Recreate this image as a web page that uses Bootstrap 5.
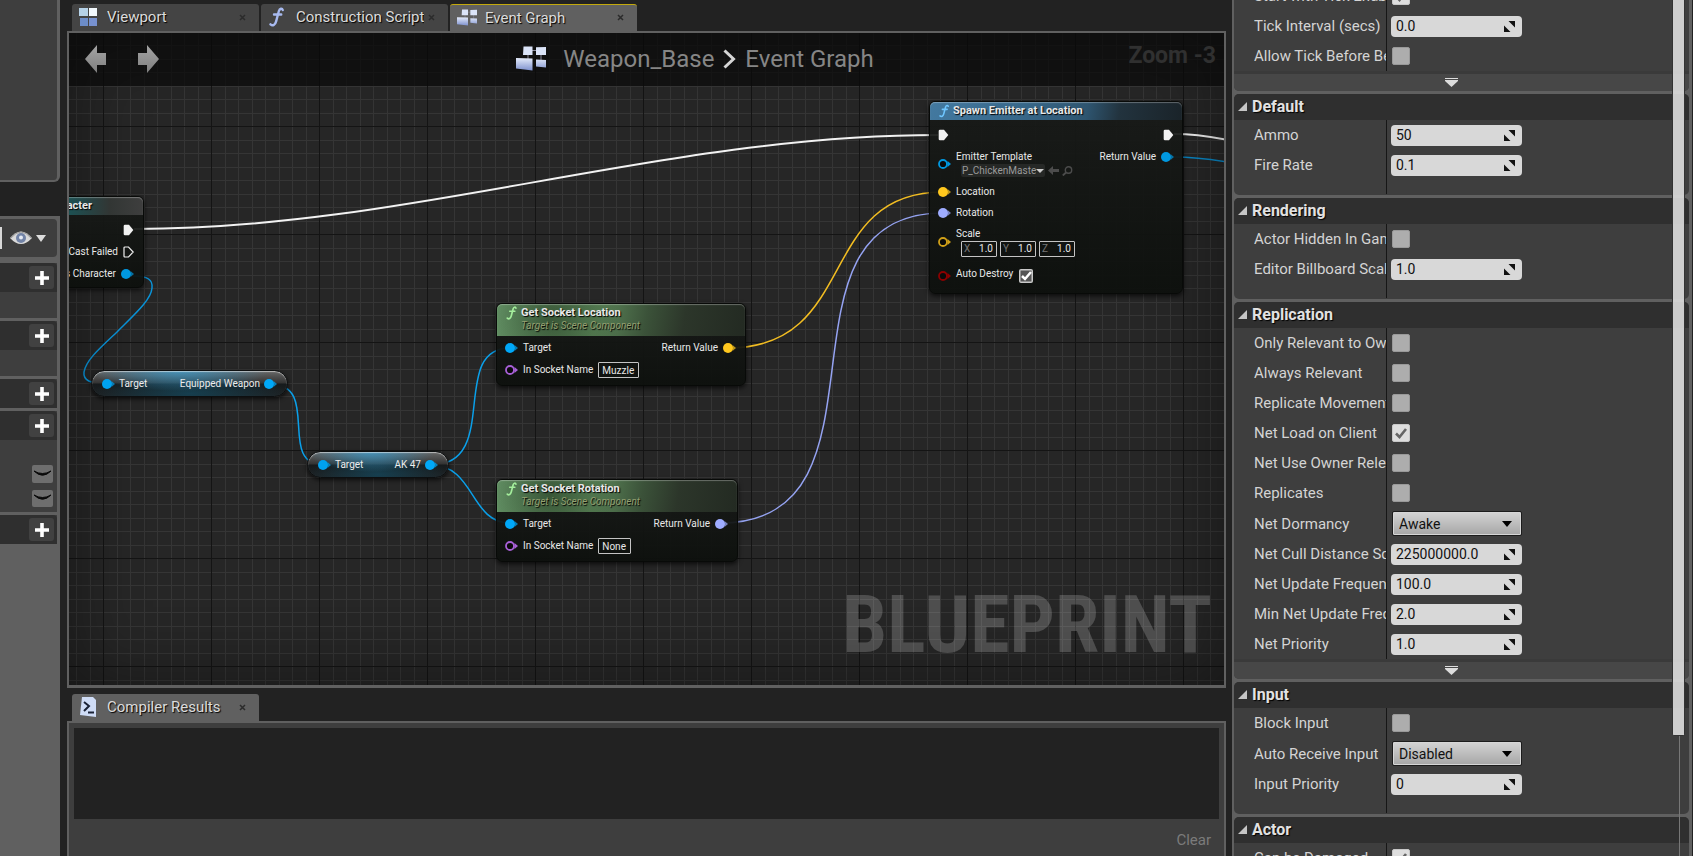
<!DOCTYPE html>
<html lang="en">
<head>
<meta charset="utf-8">
<meta name="viewport" content="width=device-width, initial-scale=1">
<title>Weapon_Base</title>
<link href="https://cdn.jsdelivr.net/npm/bootstrap@5.3.0/dist/css/bootstrap.min.css" rel="stylesheet">
<script src="https://cdn.jsdelivr.net/npm/bootstrap@5.3.0/dist/js/bootstrap.bundle.min.js"></script>
<style>
:root { --frame:#606060; --panel:#3e3e3e; --head:#2f2f2f; --dark:#222222; --ink:#d4d4d4; }
body { background:var(--dark); color:var(--ink); font-family:Roboto, "Liberation Sans", sans-serif; font-size:15px; line-height:20px; }
svg { display:block; flex:none; }
button { border:0; padding:0; background:none; color:inherit; }

/* left strip */
.side-left { width:60px; flex:none; }
.side-top { height:182px; background:var(--panel); border:solid var(--frame); border-width:0 3px 2px 0; border-radius:0 0 6px 0; margin-bottom:34px; }
.side-list { background:var(--frame); padding:3px 3px 0 0; gap:3px; }
.tools { height:38px; background:var(--panel); border-radius:0 4px 4px 0; margin-bottom:3px; gap:4px; }
.tools .search-end { width:2px; height:22px; background:#d8d8d8; margin-right:4px; }
.group { background:var(--panel); }
.group-head { height:29px; background:var(--head); border-radius:0 4px 0 0; padding-right:3px; }
.add-btn { width:25px; height:23px; background:#414141; border-radius:3px; }
.group-body { min-height:26px; }
.group-vars { padding:25px 4px 5px; gap:7px; height:72px; }
.shut-btn { width:21px; height:18px; background:#6e6e6e; border-radius:2px; }

/* tabs */
.center { margin:0 6px 0 7px; }
.tabs { padding:4px 0 0 5px; gap:2px; height:31px; }
.tabs.lower { height:33px; padding-top:6px; }
.doc-tab { width:187px; height:27px; background:#444; border-radius:3px 3px 0 0; padding:0 13px 1px 7px; color:#dcdcdc; text-shadow:1px 1px 1px #000; white-space:nowrap; overflow:hidden; }
.doc-tab.current { background:var(--frame); }
.doc-tab.lit { border-top:1px solid #c3a90c; }
.doc-tab .tab-icon { width:19px; margin-right:9px; }
.doc-tab .tab-name { flex:1; overflow:hidden; text-align:left; }

/* graph */
.graph { border:2px solid var(--frame); border-bottom-width:3px; background:#262626; overflow:hidden; }
.graph-svg { position:absolute; inset:0; width:100%; height:100%; }
.vignette { position:absolute; inset:0; box-shadow:inset 0 0 70px rgba(0,0,0,.45); pointer-events:none; }
.title-bar { position:relative; height:53px; padding-bottom:2px; background:rgba(10,10,10,.72); }
.title-bar .history { width:97px; padding-left:16px; gap:30px; }
.crumbs { font-size:24px; line-height:30px; color:#868686; gap:9px; }
.crumbs a { color:inherit; text-decoration:none; }
.zoom-text { position:absolute; right:8px; top:8px; font-size:23px; line-height:30px; font-weight:700; color:#303030; }
.watermark { position:absolute; right:12px; bottom:14px; font:700 80px/92px "Roboto Condensed", "Liberation Sans Narrow", Roboto, sans-serif; color:rgba(255,255,255,.19); }

.node { position:absolute; border:1px solid #080a08; border-radius:6px; background:linear-gradient(rgba(24,26,24,.93), rgba(13,16,13,.95)); box-shadow:0 2px 5px rgba(0,0,0,.7); font-size:10px; line-height:14px; color:#e8e8e8; }
.node-head { border-radius:5px 5px 0 0; padding:0 9px; gap:4px; font-weight:700; font-size:11px; line-height:14px; box-shadow:inset 0 1px 1px rgba(255,255,255,.3); text-shadow:1px 1px 1px #000; }
.node-head.func { height:18px; background:linear-gradient(100deg,#4379a0,#38688a 35%,#2e5570 62%,#22333e 75%,#1a2329); }
.node-head.pure { height:32px; padding-top:2px; background:radial-gradient(circle at 22% 45%,rgba(30,50,28,.6),transparent 35%),linear-gradient(100deg,#68986a,#5c8659 40%,#3b5239 60%,#2c362a 75%,#232a22); }
.node-head.cast { height:18px; background:linear-gradient(90deg,#174a4c,#1d5052 45%,#323634 75%,#3e3e3e); padding-right:51px; }
.node-head em { display:block; font-weight:400; font-size:10px; line-height:12px; color:#93a070; }
.node-body { padding-top:8px; }
.node-body.close-in { padding-top:5px; }
.pins-in { gap:6px; padding-left:8px; }
.pins-in.long { gap:7px; }
.pins-out { gap:8px; padding-right:9px; }
.pin { gap:5px; height:14px; white-space:nowrap; }
.pin.two-line { height:29px; }
.pill { position:absolute; height:27px; border:1px solid #0d0f10; border-radius:14px; padding:0 10px; font-size:10px; line-height:14px; color:#ededed; box-shadow:0 2px 4px rgba(0,0,0,.7), inset 0 1px 1px rgba(255,255,255,.55);
  background:radial-gradient(ellipse 45% 80% at 45% 0,rgba(60,150,195,.85),transparent),radial-gradient(ellipse 50% 80% at 50% 90%,rgba(20,70,90,.8),transparent),linear-gradient(#686868,#333 48%,#161a1c 52%,#1e2224); }
.pill .pin { gap:4px; }
.mini { height:16px; border:1px solid #c4c4c4; border-radius:1px; background:transparent; color:#e8e8e8; font-size:10px; line-height:14px; padding:0 3px; }
.xyz { height:16px; width:36px; border:1px solid #c4c4c4; border-radius:1px; color:#777; padding:0 3px 0 2px; }
.xyz input { width:18px; border:0; padding:0; background:transparent; color:#e8e8e8; text-align:right; font-size:10px; line-height:14px; }
.xyz-row { gap:3px; padding-left:5px; }
.asset-row { gap:3px; padding-left:5px; line-height:13px; }
.asset { width:84px; height:13px; background:#262826; border-radius:2px; color:#9a9a9a; padding:0 1px; border:0; }
.asset span { overflow:hidden; width:74px; text-align:left; }
.node-check { appearance:none; width:14px; height:14px; margin:3px 0 0 1px; border-radius:2px; background:#c9c9c9 url("data:image/svg+xml,%3Csvg xmlns='http://www.w3.org/2000/svg' viewBox='0 0 14 14'%3E%3Cpath d='M1.500 1.500h11v11h-11z' fill='%23555'/%3E%3Cpath d='M3 7l3 3 6-7' fill='none' stroke='%23fff' stroke-width='2.500'/%3E%3C/svg%3E"); }

/* compiler results */
.compiler { height:135px; border:2px solid var(--frame); border-bottom:0; background:var(--panel); padding:5px 5px 0; }
.log { height:91px; background:var(--dark); }
.clear-btn { color:#7b7b7b; margin:11px 8px 0 0; }

/* details */
.details { width:461px; flex:none; padding-right:1px; }
.details-frame { background:var(--frame); padding:0 3px 0 2px; }
.details-scroll { margin-top:-19px; gap:3px; }
.section { background:var(--panel); border-radius:5px; overflow:hidden; padding-bottom:1px; flex:none; }
.section.has-more { padding-bottom:0; }
.section-head { height:26px; background:var(--head); padding-left:4px; gap:5px; width:100%; font-weight:700; font-size:16px; color:#e2e2e2; text-shadow:1px 1px 1px #000; }
.section-head svg { margin-bottom:2px; }
.prop { height:30px; }
.prop.tall { height:31px; }
.prop.blank { height:14px; }
.prop > label, .prop > .lead-gap { width:153px; height:100%; padding-left:20px; border-right:1px solid #161616; white-space:nowrap; overflow:hidden; flex:none; }
.prop > label span { width:132px; overflow:hidden; display:block; }
.num { position:relative; margin-left:4px; width:131px; }
.num input { width:100%; height:21px; border:0; border-radius:4px; background:#d8d8d8; color:#111; font-size:14px; padding:0 24px 0 5px; display:block; }
.num svg { position:absolute; right:7px; top:5px; }
.prop .form-check-input { width:18px; height:18px; margin:0 0 0 5px; border:1px solid #999; border-radius:2px; background-color:#adadad; flex:none; }
.prop .form-check-input:checked { background-color:#dedede; border-color:#c8c8c8; background-size:18px; background-image:url("data:image/svg+xml,%3Csvg xmlns='http://www.w3.org/2000/svg' viewBox='0 0 18 18'%3E%3Cpath d='M4 9.500l3.500 3.500 6.500-8' fill='none' stroke='%23666' stroke-width='2.600'/%3E%3C/svg%3E"); }
.prop .form-select { width:130px; height:25px; margin-left:5px; border:1px solid #1c1c1c; border-radius:2px; color:#111; font-size:14px; line-height:20px; padding:1px 24px 1px 6px; box-shadow:inset 0 0 0 1px #d6d6d6;
  background:url("data:image/svg+xml,%3Csvg xmlns='http://www.w3.org/2000/svg' viewBox='0 0 10 6'%3E%3Cpath d='M0 0h10L5 6z'/%3E%3C/svg%3E") right 9px center/10px 6px no-repeat, linear-gradient(#d4d4d4,#a6a6a6); }
.more { height:20px; width:100%; border-top:3px solid #3a3a3a; background:#474747; padding:0 20px 1px 0; }
.thumb { position:absolute; top:0; right:7px; width:13px; height:86%; background:rgba(222,222,222,.9); border:solid #333; border-width:0 1px 1px; border-radius:0 0 2px 2px; }
.rail { position:absolute; top:86%; bottom:0; right:12px; width:1px; background:#777; }
</style>
</head>
<body class="vh-100 overflow-hidden m-0">
<svg width="0" height="0" class="position-absolute" aria-hidden="true">
  <defs>
    <linearGradient id="steel" x1="0" y1="0" x2="0" y2="1"><stop offset="0" stop-color="#e4ebfa"/><stop offset="1" stop-color="#7f92cf"/></linearGradient>
    <linearGradient id="arrowFill" x1="0" y1="0" x2="0" y2="1"><stop offset="0" stop-color="#a5a5a5"/><stop offset="1" stop-color="#7e7e7e"/></linearGradient>
    <symbol id="full" viewBox="0 0 13 10"><circle cx="5" cy="5" r="5" fill="currentColor"/><path d="M9.500 2 13 5 9.500 8z" fill="currentColor" opacity=".7"/></symbol>
    <symbol id="hollow" viewBox="0 0 13 10"><circle cx="5" cy="5" r="4" fill="#0a0a0a" stroke="currentColor" stroke-width="1.800"/><path d="M9.500 2 13 5 9.500 8z" fill="currentColor"/></symbol>
    <symbol id="exec" viewBox="0 0 11 12"><path d="M.700 2Q.700.700 2 .700H6L10.300 6 6 11.300H2Q.700 11.300.700 10z" fill="#f2f2f2"/></symbol>
    <symbol id="execOpen" viewBox="0 0 11 12"><path d="M1 2Q1 1 2 1H5.500L10.200 6 5.500 11H2Q1 11 1 10z" fill="none" stroke="#eee" stroke-width="1.200"/></symbol>
    <symbol id="fx" viewBox="0 0 12 16"><path d="M11 2.400C10.500.800 8.600 1 7.900 3.200L5.700 11.500C5 14.300 3 15.500 1.200 13.900M4 6H9.800" fill="none" stroke="currentColor" stroke-width="1.900" stroke-linecap="round"/></symbol>
    <symbol id="x" viewBox="0 0 7 7"><path d="M1 1l5 5M6 1L1 6" stroke="#2b2b2b" stroke-width="1.500"/></symbol>
    <symbol id="plus" viewBox="0 0 14 14"><path d="M5.200 0h3.600v5.200H14v3.600H8.800V14H5.200V8.800H0V5.200h5.200z" fill="#fff"/></symbol>
    <symbol id="shut" viewBox="0 0 19 8"><path d="M1 1Q9.500 9.500 18 1Q9.500 6 1 1z" fill="#0a0a0a" stroke="#0a0a0a"/></symbol>
    <symbol id="graphIcon" viewBox="0 0 30 24"><path d="M16 4h6M12 8v5M25 8v6" stroke="#8a8a9a"/><path d="M7.500 0H16.500V8.500H7zM20 .800 30 .500V8.500H20z" fill="#dbe4f8"/><path d="M0 11.500 16.500 12V24L0 22zM20 13 30 13.500V21L20 20z" fill="url(#steel)"/></symbol>
    <symbol id="spin" viewBox="0 0 11 11"><path d="M4.500 0H11v6.500zM0 4.500V11h6.500z" fill="#111"/></symbol>
    <symbol id="open" viewBox="0 0 9 9"><path d="M9 0v9H0z" fill="#c6c6c6"/></symbol>
    <symbol id="moreIcon" viewBox="0 0 13 9"><path d="M0 .500h13M0 2.500h13" stroke="#ddd"/><path d="M0 3h13L6.500 9z" fill="#ddd"/></symbol>
  </defs>
</svg>

<div class="d-flex h-100">
  <aside class="side-left d-flex flex-column" aria-label="My Blueprint">
    <div class="side-top flex-shrink-0"></div>
    <div class="side-list d-flex flex-column flex-grow-1">
      <div class="tools d-flex align-items-center flex-shrink-0">
        <span class="search-end"></span>
        <button class="d-flex align-items-center gap-1" aria-label="View options">
          <svg width="22" height="14" viewBox="0 0 22 14"><path d="M0 7Q11-6 22 7 11 19 0 7z" fill="#d9d9d9"/><circle cx="11" cy="7" r="5" fill="#7283a6"/><circle cx="11" cy="6.500" r="2" fill="#e5eaf3"/><path d="M1 7Q11-5 21 7" fill="none" stroke="#999"/></svg>
          <svg width="10" height="7" viewBox="0 0 10 7"><path d="M0 0h10L5 7z" fill="#ddd"/></svg>
        </button>
      </div>
      <div class="group"><div class="group-head d-flex align-items-center justify-content-end"><button class="add-btn d-flex align-items-center justify-content-center" aria-label="Add graph"><svg width="14" height="14"><use href="#plus"/></svg></button></div><div class="group-body"></div></div>
      <div class="group"><div class="group-head d-flex align-items-center justify-content-end"><button class="add-btn d-flex align-items-center justify-content-center" aria-label="Add function"><svg width="14" height="14"><use href="#plus"/></svg></button></div><div class="group-body"></div></div>
      <div class="group"><div class="group-head d-flex align-items-center justify-content-end"><button class="add-btn d-flex align-items-center justify-content-center" aria-label="Add macro"><svg width="14" height="14"><use href="#plus"/></svg></button></div></div>
      <div class="group"><div class="group-head d-flex align-items-center justify-content-end"><button class="add-btn d-flex align-items-center justify-content-center" aria-label="Add variable"><svg width="14" height="14"><use href="#plus"/></svg></button></div>
        <div class="group-vars d-flex flex-column align-items-end">
          <button class="shut-btn d-flex align-items-center justify-content-center" aria-label="Show variable"><svg width="19" height="8"><use href="#shut"/></svg></button>
          <button class="shut-btn d-flex align-items-center justify-content-center" aria-label="Show variable"><svg width="19" height="8"><use href="#shut"/></svg></button>
        </div></div>
      <div class="group"><div class="group-head d-flex align-items-center justify-content-end"><button class="add-btn d-flex align-items-center justify-content-center" aria-label="Add dispatcher"><svg width="14" height="14"><use href="#plus"/></svg></button></div></div>
    </div>
  </aside>

  <main class="center d-flex flex-column flex-grow-1 overflow-hidden">
    <div class="tabs d-flex flex-shrink-0">
      <button class="doc-tab d-flex align-items-center"><span class="tab-icon"><svg width="19" height="19" viewBox="0 0 19 19"><path d="M0 0h9v8H0z" fill="#b6d2e8"/><path d="M10 0h8v8h-8z" fill="#f2f8fd"/><path d="M1 10h8v8H1z" fill="#6c8cc8"/><path d="M10 10h8v8h-8z" fill="#7791d0"/></svg></span><span class="tab-name">Viewport</span><svg width="7" height="7"><use href="#x"/></svg></button>
      <button class="doc-tab d-flex align-items-center"><span class="tab-icon"><svg width="17" height="20" color="#a8baf0"><use href="#fx"/></svg></span><span class="tab-name">Construction Script</span><svg width="7" height="7" class="ms-1"><use href="#x"/></svg></button>
      <button class="doc-tab current lit d-flex align-items-center"><span class="tab-icon"><svg width="20" height="17"><use href="#graphIcon"/></svg></span><span class="tab-name">Event Graph</span><svg width="7" height="7"><use href="#x"/></svg></button>
    </div>

    <section class="graph position-relative flex-grow-1" aria-label="Event Graph">
      <svg class="graph-svg" aria-hidden="true">
        <defs>
          <pattern id="grid" x="34" y="93" width="108" height="108" patternUnits="userSpaceOnUse">
            <path d="M14.500 0v108M27.500 0v108M41.500 0v108M54.500 0v108M68.500 0v108M81.500 0v108M95.500 0v108M0 14.500h108M0 27.500h108M0 41.500h108M0 54.500h108M0 68.500h108M0 81.500h108M0 95.500h108" stroke="#353535" fill="none"/>
            <path d="M.500 0v108M0 .500h108" stroke="#141414" fill="none"/>
          </pattern>
        </defs>
        <rect width="100%" height="100%" fill="url(#grid)"/>
        <g transform="translate(-69 -33)" fill="none" stroke-width="1.500">
          <path d="M134 229C410 229 660 135 938 135M1174 134Q1200 134 1232 141" stroke="#f2f2f2" stroke-width="2"/>
          <path d="M133 276C148 276 153 280 152 288C151 300 135 314 117 332C100 348 86 360 84 372C83 380 90 384 107 384" stroke="#0a93d8"/>
          <path d="M270 384C322 384 276 465 324 465M431 465C502 465 448 348 510 348M431 465C475 465 470 523 510 523" stroke="#0aa0ea"/>
          <path d="M1174 157Q1200 157 1232 163" stroke="#0a86c4"/>
          <path d="M728 348C860 348 815 192 943 192" stroke="#f2bd22"/>
          <path d="M720 523C905 523 760 213 943 213" stroke="#95a3f2"/>
        </g>
      </svg>
      <div class="vignette"></div>

      <div class="title-bar d-flex align-items-center">
        <div class="history d-flex align-items-center flex-shrink-0">
          <button aria-label="Back"><svg width="22" height="28" viewBox="0 0 22 28"><path d="M0 14 12 0v8h9v12h-9v8z" fill="url(#arrowFill)"/></svg></button>
          <button aria-label="Forward"><svg width="22" height="28" viewBox="0 0 22 28"><path d="M22 14 10 0v8H1v12h9v8z" fill="url(#arrowFill)"/></svg></button>
        </div>
        <nav class="crumbs d-flex align-items-center justify-content-center flex-grow-1" aria-label="Breadcrumb">
          <svg width="30" height="25" class="me-2"><use href="#graphIcon"/></svg>
          <a href="#">Weapon_Base</a>
          <svg width="13" height="20" viewBox="0 0 13 20"><path d="M1.500 1.500 10.500 10 1.500 18.500" fill="none" stroke="#d5d5d5" stroke-width="3"/></svg>
          <a href="#">Event Graph</a>
        </nav>
        <span class="zoom-text">Zoom -3</span>
      </div>
      <div class="watermark">BLUEPRINT</div>

      <article class="node" style="left:-60px;top:163px;width:135px;height:92px">
        <div class="node-head cast d-flex align-items-center justify-content-end">Character</div>
        <div class="node-body pins-out d-flex flex-column align-items-end">
          <div class="pin d-flex align-items-center"><svg width="11" height="12"><use href="#exec"/></svg></div>
          <div class="pin d-flex align-items-center">Cast Failed<svg width="11" height="12"><use href="#execOpen"/></svg></div>
          <div class="pin d-flex align-items-center">As Character<svg width="13" height="10" color="#0098e0"><use href="#full"/></svg></div>
        </div>
      </article>

      <article class="pill d-flex align-items-center justify-content-between" style="left:22px;top:337px;width:197px">
        <span class="pin d-flex align-items-center"><svg width="13" height="10" color="#00a2f0"><use href="#full"/></svg>Target</span>
        <span class="pin d-flex align-items-center">Equipped Weapon<svg width="13" height="10" color="#00a8f8"><use href="#full"/></svg></span>
      </article>
      <article class="pill d-flex align-items-center justify-content-between" style="left:238px;top:418px;width:142px">
        <span class="pin d-flex align-items-center"><svg width="13" height="10" color="#00a2f0"><use href="#full"/></svg>Target</span>
        <span class="pin d-flex align-items-center">AK 47<svg width="13" height="10" color="#00a8f8"><use href="#full"/></svg></span>
      </article>

      <article class="node" style="left:427px;top:270px;width:250px;height:83px">
        <div class="node-head pure d-flex"><svg width="11" height="14" color="#a4ee9c"><use href="#fx"/></svg><div>Get Socket Location<em>Target is Scene Component</em></div></div>
        <div class="node-body close-in d-flex justify-content-between">
          <div class="pins-in d-flex flex-column">
            <div class="pin d-flex align-items-center"><svg width="13" height="10" color="#00a8f8"><use href="#full"/></svg>Target</div>
            <div class="pin d-flex align-items-center pt-1"><svg width="13" height="10" color="#a860d8"><use href="#hollow"/></svg><label for="sock1">In Socket Name</label><input id="sock1" class="mini" value="Muzzle" style="width:41px"></div>
          </div>
          <div class="pins-out d-flex flex-column"><div class="pin d-flex align-items-center">Return Value<svg width="13" height="10" color="#ffc81e"><use href="#full"/></svg></div></div>
        </div>
      </article>
      <article class="node" style="left:427px;top:446px;width:242px;height:83px">
        <div class="node-head pure d-flex"><svg width="11" height="14" color="#a4ee9c"><use href="#fx"/></svg><div>Get Socket Rotation<em>Target is Scene Component</em></div></div>
        <div class="node-body close-in d-flex justify-content-between">
          <div class="pins-in d-flex flex-column">
            <div class="pin d-flex align-items-center"><svg width="13" height="10" color="#00a8f8"><use href="#full"/></svg>Target</div>
            <div class="pin d-flex align-items-center pt-1"><svg width="13" height="10" color="#a860d8"><use href="#hollow"/></svg><label for="sock2">In Socket Name</label><input id="sock2" class="mini" value="None" style="width:33px"></div>
          </div>
          <div class="pins-out d-flex flex-column"><div class="pin d-flex align-items-center">Return Value<svg width="13" height="10" color="#9eacff"><use href="#full"/></svg></div></div>
        </div>
      </article>

      <article class="node" style="left:860px;top:68px;width:254px;height:193px">
        <div class="node-head func d-flex align-items-center"><svg width="10" height="14" color="#6fc6ff"><use href="#fx"/></svg>Spawn Emitter at Location</div>
        <div class="node-body d-flex justify-content-between">
          <div class="pins-in long d-flex flex-column">
            <div class="pin d-flex align-items-center"><svg width="11" height="12"><use href="#exec"/></svg></div>
            <div class="pin two-line d-flex align-items-center"><svg width="13" height="10" color="#0098e0"><use href="#hollow"/></svg>
              <div>Emitter Template
                <div class="asset-row d-flex align-items-center"><button class="asset d-flex align-items-center"><span>P_ChickenMaster</span><svg width="8" height="4" viewBox="0 0 8 4"><path d="M0 0h8L4 4z" fill="#ccc"/></svg></button><svg width="11" height="9" viewBox="0 0 11 9"><path d="M0 4.500 5 0v3h6v3H5v3z" fill="#4c4c4c"/></svg><svg width="11" height="10" viewBox="0 0 11 10"><circle cx="6.500" cy="4" r="3.200" fill="none" stroke="#4c4c4c" stroke-width="1.400"/><path d="M4 6.500.800 9.500" stroke="#4c4c4c" stroke-width="1.800"/></svg></div>
              </div></div>
            <div class="pin d-flex align-items-center"><svg width="13" height="10" color="#ffc81e"><use href="#full"/></svg>Location</div>
            <div class="pin d-flex align-items-center"><svg width="13" height="10" color="#9eacff"><use href="#full"/></svg>Rotation</div>
            <div class="pin two-line d-flex align-items-center"><svg width="13" height="10" color="#d0a018"><use href="#hollow"/></svg>
              <div>Scale
                <div class="xyz-row d-flex"><label class="xyz d-flex justify-content-between">X<input value="1.0"></label><label class="xyz d-flex justify-content-between">Y<input value="1.0"></label><label class="xyz d-flex justify-content-between">Z<input value="1.0"></label></div>
              </div></div>
            <div class="pin d-flex align-items-center mt-1"><svg width="13" height="10" color="#8c0000" class="mt-1"><use href="#hollow"/></svg><label for="autod">Auto Destroy</label><input id="autod" type="checkbox" class="node-check" checked></div>
          </div>
          <div class="pins-out d-flex flex-column align-items-end pe-2">
            <div class="pin d-flex align-items-center"><svg width="11" height="12"><use href="#exec"/></svg></div>
            <div class="pin d-flex align-items-center">Return Value<svg width="13" height="10" color="#0098e0"><use href="#full"/></svg></div>
          </div>
        </div>
      </article>
    </section>

    <div class="tabs lower d-flex flex-shrink-0">
      <button class="doc-tab current d-flex align-items-center"><span class="tab-icon"><svg width="19" height="20" viewBox="0 0 19 20"><path d="M3 0h11l3 3v17L1 18z" fill="#cfdcf6"/><path d="M5 5l5 4-5 5" fill="none" stroke="#1a2236" stroke-width="2"/><path d="M9 15.500h6" stroke="#1a2236" stroke-width="2"/></svg></span><span class="tab-name">Compiler Results</span><svg width="7" height="7"><use href="#x"/></svg></button>
    </div>
    <section class="compiler flex-shrink-0" aria-label="Compiler Results">
      <div class="log" role="log"></div>
      <div class="d-flex justify-content-end"><button class="clear-btn">Clear</button></div>
    </section>
  </main>

  <aside class="details" aria-label="Details">
    <div class="details-frame position-relative h-100 overflow-hidden">
      <div class="details-scroll d-flex flex-column">
        <section class="section has-more">
          <div class="prop d-flex align-items-center"><label for="p1" class="d-flex align-items-center"><span>Start with Tick Enabled</span></label><input id="p1" type="checkbox" class="form-check-input" checked></div>
          <div class="prop d-flex align-items-center"><label for="p2" class="d-flex align-items-center"><span>Tick Interval (secs)</span></label><div class="num"><input id="p2" value="0.0"><svg width="11" height="11"><use href="#spin"/></svg></div></div>
          <div class="prop d-flex align-items-center"><label for="p3" class="d-flex align-items-center"><span>Allow Tick Before Begin Play</span></label><input id="p3" type="checkbox" class="form-check-input"></div>
          <button class="more d-flex align-items-center justify-content-center" aria-label="Show more"><svg width="13" height="9"><use href="#moreIcon"/></svg></button>
        </section>
        <section class="section">
          <button class="section-head d-flex align-items-center"><svg width="9" height="9"><use href="#open"/></svg>Default</button>
          <div class="prop d-flex align-items-center"><label for="p4" class="d-flex align-items-center"><span>Ammo</span></label><div class="num"><input id="p4" value="50"><svg width="11" height="11"><use href="#spin"/></svg></div></div>
          <div class="prop d-flex align-items-center"><label for="p5" class="d-flex align-items-center"><span>Fire Rate</span></label><div class="num"><input id="p5" value="0.1"><svg width="11" height="11"><use href="#spin"/></svg></div></div>
          <div class="prop blank"><div class="lead-gap"></div></div>
        </section>
        <section class="section">
          <button class="section-head d-flex align-items-center"><svg width="9" height="9"><use href="#open"/></svg>Rendering</button>
          <div class="prop d-flex align-items-center"><label for="p6" class="d-flex align-items-center"><span>Actor Hidden In Game</span></label><input id="p6" type="checkbox" class="form-check-input"></div>
          <div class="prop d-flex align-items-center"><label for="p7" class="d-flex align-items-center"><span>Editor Billboard Scale</span></label><div class="num"><input id="p7" value="1.0"><svg width="11" height="11"><use href="#spin"/></svg></div></div>
          <div class="prop blank"><div class="lead-gap"></div></div>
        </section>
        <section class="section has-more">
          <button class="section-head d-flex align-items-center"><svg width="9" height="9"><use href="#open"/></svg>Replication</button>
          <div class="prop d-flex align-items-center"><label for="p8" class="d-flex align-items-center"><span>Only Relevant to Owner</span></label><input id="p8" type="checkbox" class="form-check-input"></div>
          <div class="prop d-flex align-items-center"><label for="p9" class="d-flex align-items-center"><span>Always Relevant</span></label><input id="p9" type="checkbox" class="form-check-input"></div>
          <div class="prop d-flex align-items-center"><label for="p10" class="d-flex align-items-center"><span>Replicate Movement</span></label><input id="p10" type="checkbox" class="form-check-input"></div>
          <div class="prop d-flex align-items-center"><label for="p11" class="d-flex align-items-center"><span>Net Load on Client</span></label><input id="p11" type="checkbox" class="form-check-input" checked></div>
          <div class="prop d-flex align-items-center"><label for="p12" class="d-flex align-items-center"><span>Net Use Owner Relevancy</span></label><input id="p12" type="checkbox" class="form-check-input"></div>
          <div class="prop d-flex align-items-center"><label for="p13" class="d-flex align-items-center"><span>Replicates</span></label><input id="p13" type="checkbox" class="form-check-input"></div>
          <div class="prop tall d-flex align-items-center"><label for="p14" class="d-flex align-items-center"><span>Net Dormancy</span></label><select id="p14" class="form-select"><option>Awake</option></select></div>
          <div class="prop d-flex align-items-center"><label for="p15" class="d-flex align-items-center"><span>Net Cull Distance Squared</span></label><div class="num"><input id="p15" value="225000000.0"><svg width="11" height="11"><use href="#spin"/></svg></div></div>
          <div class="prop d-flex align-items-center"><label for="p16" class="d-flex align-items-center"><span>Net Update Frequency</span></label><div class="num"><input id="p16" value="100.0"><svg width="11" height="11"><use href="#spin"/></svg></div></div>
          <div class="prop d-flex align-items-center"><label for="p17" class="d-flex align-items-center"><span>Min Net Update Frequency</span></label><div class="num"><input id="p17" value="2.0"><svg width="11" height="11"><use href="#spin"/></svg></div></div>
          <div class="prop d-flex align-items-center"><label for="p18" class="d-flex align-items-center"><span>Net Priority</span></label><div class="num"><input id="p18" value="1.0"><svg width="11" height="11"><use href="#spin"/></svg></div></div>
          <button class="more d-flex align-items-center justify-content-center" aria-label="Show more"><svg width="13" height="9"><use href="#moreIcon"/></svg></button>
        </section>
        <section class="section">
          <button class="section-head d-flex align-items-center"><svg width="9" height="9"><use href="#open"/></svg>Input</button>
          <div class="prop d-flex align-items-center"><label for="p19" class="d-flex align-items-center"><span>Block Input</span></label><input id="p19" type="checkbox" class="form-check-input"></div>
          <div class="prop tall d-flex align-items-center"><label for="p20" class="d-flex align-items-center"><span>Auto Receive Input</span></label><select id="p20" class="form-select"><option>Disabled</option></select></div>
          <div class="prop d-flex align-items-center"><label for="p21" class="d-flex align-items-center"><span>Input Priority</span></label><div class="num"><input id="p21" value="0"><svg width="11" height="11"><use href="#spin"/></svg></div></div>
          <div class="prop blank"><div class="lead-gap"></div></div>
        </section>
        <section class="section">
          <button class="section-head d-flex align-items-center"><svg width="9" height="9"><use href="#open"/></svg>Actor</button>
          <div class="prop d-flex align-items-center"><label for="p22" class="d-flex align-items-center"><span>Can be Damaged</span></label><input id="p22" type="checkbox" class="form-check-input" checked></div>
        </section>
      </div>
      <div class="rail"></div>
      <div class="thumb"></div>
    </div>
  </aside>
</div>
</body>
</html>
